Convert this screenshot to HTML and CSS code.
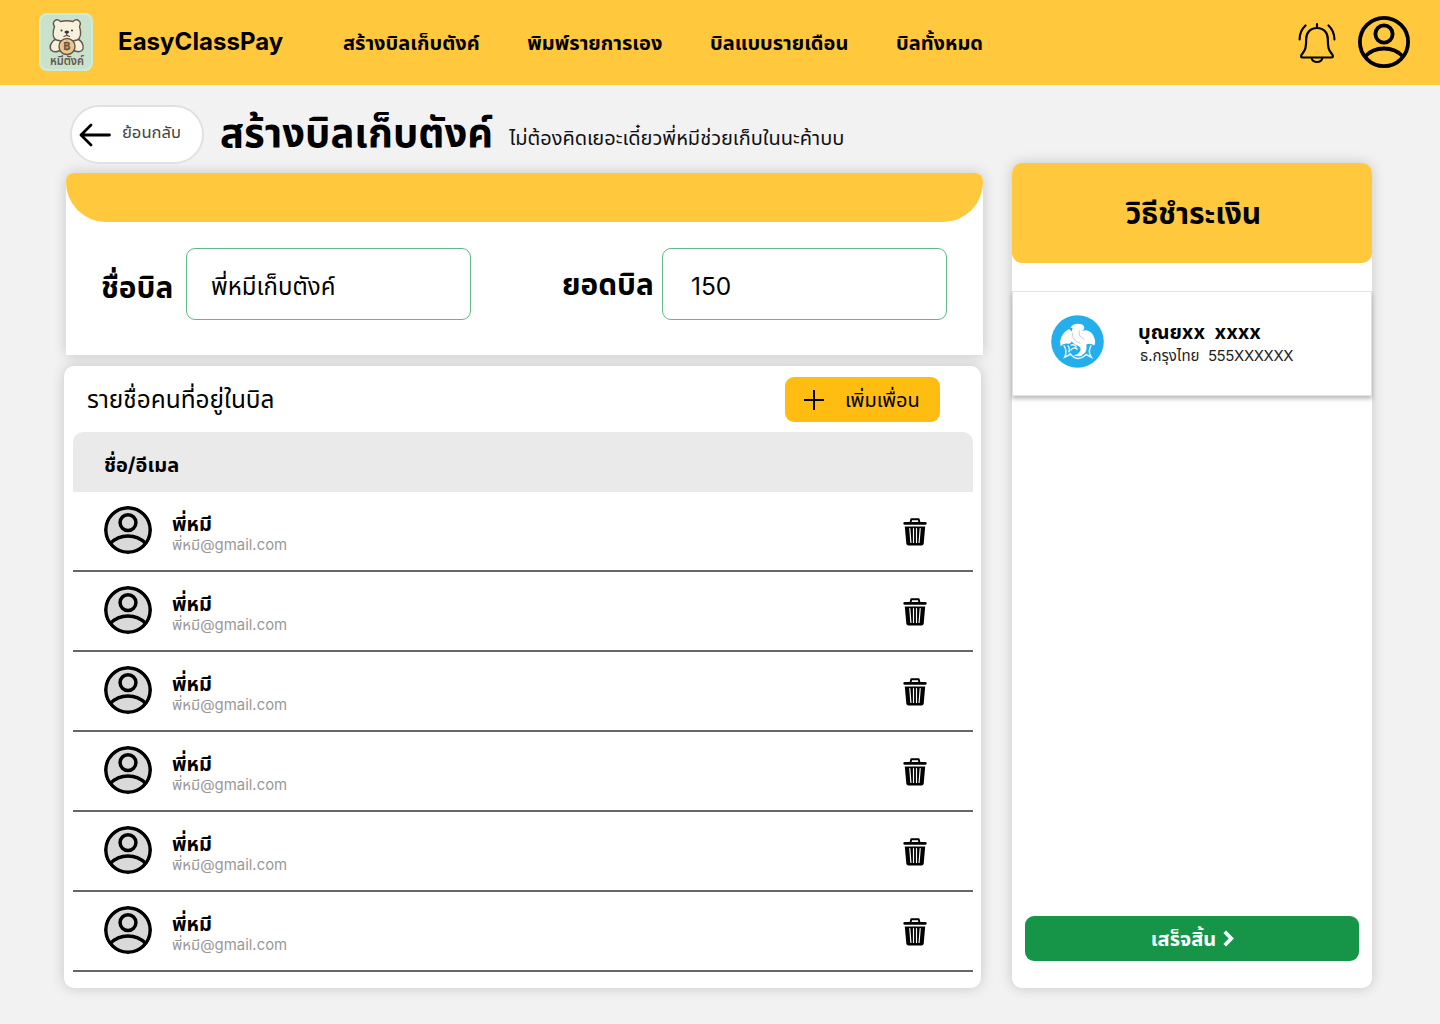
FILE: index.html
```html
<!DOCTYPE html>
<html lang="th">
<head>
<meta charset="utf-8">
<title>EasyClassPay</title>
<link rel="stylesheet" href="styles.css">
</head>
<body>
<svg class="sprite" aria-hidden="true">
  <symbol id="user" viewBox="0 0 52 52">
    <g fill="none" stroke="currentColor" stroke-width="3.800">
      <circle cx="26" cy="26" r="24.100"/>
      <circle cx="26" cy="18" r="8.600"/>
      <path d="M7 40.500C17 29.800 35 29.800 45 40.500"/>
    </g>
  </symbol>
  <symbol id="trash" viewBox="0 0 24 28">
    <path d="M7.500 4.500 8.300 1.300H15.700L16.500 4.500" fill="none" stroke="currentColor" stroke-width="1.900" stroke-linejoin="round"/>
    <rect x="0.400" y="3.900" width="23.200" height="2.900" rx="1.200" fill="currentColor"/>
    <path d="M1.800 8.500H22.200L20.700 25.400Q20.500 27.500 18.600 27.500H5.400Q3.500 27.500 3.300 25.400Z" fill="currentColor"/>
    <path d="M6.800 10.500 7.900 24.500M10.500 10.500V24.500M13.500 10.500V24.500M17.200 10.500 16.100 24.500" stroke="#fff" stroke-width="1.200" fill="none" stroke-linecap="round"/>
  </symbol>
</svg>

<header class="topbar">
  <svg class="logo" viewBox="0 0 54 58">
    <rect width="54" height="58" rx="8" fill="#cdebd9"/>
    <rect x="2" y="2" width="50" height="54" rx="7" fill="#c8e2cd"/>
    <g fill="#f7f0dc" stroke="#65564a" stroke-width="1.400">
      <path d="M17 26C12 28 10 34 12 37Q15 40 20 38H36Q42 40 44 36C45 31 42 27 38 26Z"/>
      <path d="M15.500 13.500C12.500 9 17 4.500 21.500 8.500Q28 7 34 8.500C38.500 4.500 43 9 40.500 13.500C42.500 20 42 25 38 27Q28 30 17.500 27C13.500 25 13.500 19 15.500 13.500Z"/>
      <circle cx="28" cy="33.500" r="8" fill="#ebc78b"/>
    </g>
    <circle cx="22.500" cy="17.500" r="1" fill="#3f3029"/>
    <circle cx="33" cy="17.500" r="1" fill="#3f3029"/>
    <ellipse cx="27.800" cy="19" rx="2.300" ry="1.500" fill="#3f3029"/>
    <path d="M27.800 20V22.500M24.500 23.500Q27.800 21.500 31 23.500" fill="none" stroke="#3f3029"/>
    <text x="28" y="37.300" text-anchor="middle" class="logo-coin">฿</text>
    <text x="28" y="52" text-anchor="middle" class="logo-word" textLength="34" lengthAdjust="spacingAndGlyphs">หมีตังค์</text>
  </svg>
  <div class="brand">EasyClassPay</div>
  <nav class="nav">
    <a>สร้างบิลเก็บตังค์</a>
    <a>พิมพ์รายการเอง</a>
    <a>บิลแบบรายเดือน</a>
    <a>บิลทั้งหมด</a>
  </nav>
  <svg class="bell" viewBox="0 0 38 42" fill="none" stroke="#000" stroke-width="2.200" stroke-linecap="round" stroke-linejoin="round">
    <path d="M19 2V6M19 6C12 6 8.200 11 8.200 17C8.200 25 7.500 28 4.500 31.500C2 34.500 3 35.500 5 35.500H33C35 35.500 36 34.500 33.500 31.500C30.500 28 29.800 25 29.800 17C29.800 11 26 6 19 6ZM13.500 35.500C14 41.500 24 41.500 24.500 35.500M7.500 3.500Q1.600 9 1.600 17.500M30.500 3.500Q36.400 9 36.400 17.500"/>
  </svg>
  <svg class="profile"><use href="#user"/></svg>
</header>

<main class="page">
  <section class="left">
    <div class="heading">
      <a class="back">
        <svg class="arrow" viewBox="0 0 32 24" fill="none" stroke="#000" stroke-width="2.800" stroke-linecap="round" stroke-linejoin="round"><path d="M30.500 12H2M12 2 2 12 12 22"/></svg>
        <span>ย้อนกลับ</span>
      </a>
      <h1>สร้างบิลเก็บตังค์</h1>
      <p class="tagline">ไม่ต้องคิดเยอะเดี๋ยวพี่หมีช่วยเก็บในนะค้าบบ</p>
    </div>

    <div class="bill">
      <div class="bill-band"></div>
      <div class="bill-fields">
        <label class="label-name">ชื่อบิล</label>
        <div class="field field-name"><span>พี่หมีเก็บตังค์</span></div>
        <label class="label-total">ยอดบิล</label>
        <div class="field field-amount"><span>150</span></div>
      </div>
    </div>

    <div class="people">
      <div class="people-head">
        <h2>รายชื่อคนที่อยู่ในบิล</h2>
        <button class="add">
          <svg class="plus" viewBox="0 0 20 20" stroke="#000" stroke-width="2"><path d="M10 0V20M0 10H20"/></svg>
          <span>เพิ่มเพื่อน</span>
        </button>
      </div>
      <div class="table-head"><span>ชื่อ/อีเมล</span></div>
      <div class="row"><svg class="avatar"><use href="#user"/></svg><div class="who"><b>พี่หมี</b><small>พี่หมี@gmail.com</small></div><svg class="trash"><use href="#trash"/></svg></div>
      <div class="row"><svg class="avatar"><use href="#user"/></svg><div class="who"><b>พี่หมี</b><small>พี่หมี@gmail.com</small></div><svg class="trash"><use href="#trash"/></svg></div>
      <div class="row"><svg class="avatar"><use href="#user"/></svg><div class="who"><b>พี่หมี</b><small>พี่หมี@gmail.com</small></div><svg class="trash"><use href="#trash"/></svg></div>
      <div class="row"><svg class="avatar"><use href="#user"/></svg><div class="who"><b>พี่หมี</b><small>พี่หมี@gmail.com</small></div><svg class="trash"><use href="#trash"/></svg></div>
      <div class="row"><svg class="avatar"><use href="#user"/></svg><div class="who"><b>พี่หมี</b><small>พี่หมี@gmail.com</small></div><svg class="trash"><use href="#trash"/></svg></div>
      <div class="row"><svg class="avatar"><use href="#user"/></svg><div class="who"><b>พี่หมี</b><small>พี่หมี@gmail.com</small></div><svg class="trash"><use href="#trash"/></svg></div>
    </div>
  </section>

  <aside class="payment">
    <h2 class="pay-title"><span>วิธีชำระเงิน</span></h2>
    <div class="account">
      <svg class="bank" viewBox="0 0 54 54">
        <circle cx="27" cy="27" r="26.800" fill="#25aeec"/>
        <path d="M20 13Q22 9 27 9Q34 9 34 13.500Q33 16 31 16Q38 14 42 19C45 24 46 28 44 31Q40 28 36 30Q37 36 34 39Q30 44 23 41Q28 41 30 36Q31 33 27 31Q23 30 21 27Q20 30 16 29Q12 29 10 32C8 26 11 18 18 14.500Q20 15 21 17L22 13.500Z" fill="#fff"/>
        <path d="M22 18Q21 26 30 29M29 16Q27 21 34 25" fill="none" stroke="#b9c9d1" stroke-width=".9"/>
        <path d="M13 31Q17 37 14 43L20 40M17 31Q20 34 18 38M41 31Q37 37 41 43L35 40M20 31Q24 29 26 33M20 36Q23 32 27 35M19 39Q27 49 36 40" fill="none" stroke="#e5f6fe" stroke-width="1.500"/>
      </svg>
      <div class="account-text"><b>บุณยxx&nbsp; xxxx</b><span>ธ.กรุงไทย&nbsp; <i>555XXXXXX</i></span></div>
    </div>
    <button class="done">
      <span>เสร็จสิ้น</span>
      <svg class="chevron" viewBox="0 0 11 17" fill="none" stroke="#fff" stroke-width="3.800"><path d="M1.700 1.700 8.300 8.500 1.700 15.300"/></svg>
    </button>
  </aside>
</main>
</body>
</html>
```
FILE: styles.css
```css
* { box-sizing: border-box; }
body {
  margin: 0;
  width: 1440px;
  height: 1024px;
  overflow: hidden;
  background: #f2f2f2;
  color: #000;
  font-family: Inter, "Noto Sans Thai", "Noto Sans", sans-serif;
}
h1, h2, p { margin: 0; }
button { border: 0; padding: 0; font: inherit; color: inherit; }
svg { display: block; flex: none; }
span, a, label, b, small, h1, h2, p { white-space: nowrap; }
.sprite { width: 0; height: 0; position: absolute; }

.topbar {
  height: 85px;
  background: #ffc83d;
  display: flex;
  align-items: center;
  padding: 0 30px 1px 39px;
}
.logo { width: 54px; height: 58px; }
.logo-coin { font-size: 11px; font-weight: 700; fill: #65564a; }
.logo-word { font-size: 12px; font-weight: 600; fill: #65564a; }
.brand { width: 225px; margin-left: 25px; font-size: 24px; font-weight: 650; line-height: 30px; letter-spacing: .050px; }
.nav { display: flex; flex: 1; gap: 47.700px; padding-top: 1px; font-size: 20px; font-weight: 700; line-height: 30px; }
.bell { width: 38px; height: 42px; margin: 2px 22px 0 0; }
.profile { width: 52px; height: 52px; }

.page { display: flex; align-items: flex-start; gap: 29px; padding-left: 64px; }
.left { width: 919px; }
.heading { height: 88px; display: flex; padding: 20px 0 0 6px; }
.back {
  width: 134px;
  height: 59px;
  border: 2px solid #e1e1e1;
  border-radius: 30px;
  background: #fff;
  display: flex;
  align-items: center;
  gap: 11px;
  padding-left: 7px;
  font-size: 16.600px;
  color: #444;
}
.back span { margin-bottom: 4px; }
.arrow { width: 32px; height: 24px; }
.heading h1 { margin: 3px 0 0 16px; font-size: 40px; line-height: 50px; }
.tagline { margin: 18px 0 0 16px; font-size: 20px; line-height: 30px; color: #111; }

.bill {
  margin-left: 2px;
  width: 917px;
  height: 182px;
  background: #fff;
  border-radius: 8px 8px 0 0;
  box-shadow: 0 0 14px rgba(0, 0, 0, .18);
}
.bill-band { height: 49px; background: #ffc83d; border-radius: 8px 8px 40px 40px; }
.bill-fields { display: flex; padding: 26px 0 0 35px; }
.bill-fields label { font-size: 29.800px; font-weight: 700; line-height: 40px; }
.label-name { width: 85px; margin-top: 19px; }
.label-total { width: 100px; margin: 16px 0 0 91px; }
.field {
  width: 285px;
  height: 72px;
  border: 1.500px solid #61b986;
  border-radius: 9px;
  display: flex;
  align-items: center;
  font-size: 24px;
}
.field-name { padding: 7px 0 0 24px; }
.field-amount { padding: 4px 0 0 28px; font-size: 24.500px; }

.people {
  position: relative;
  width: 917px;
  height: 622px;
  margin-top: 11px;
  padding: 0 8px 0 9px;
  background: #fff;
  border-radius: 10px;
  box-shadow: 0 0 14px rgba(0, 0, 0, .18);
}
.people-head { height: 66px; display: flex; justify-content: space-between; padding: 11px 33px 0 14px; }
.people-head h2 { font-size: 24.400px; font-weight: 400; line-height: 45px; }
.add {
  width: 155px;
  height: 45px;
  border-radius: 9px;
  background: #ffbc11;
  display: flex;
  align-items: center;
  gap: 21px;
  padding-left: 19px;
  font-size: 20px;
}
.add span { margin-top: 2px; }
.plus { width: 20px; height: 20px; }
.table-head {
  height: 60px;
  border-radius: 10px 10px 0 0;
  background: #eaeaea;
  padding: 3px 0 0 31px;
  font-size: 20px;
  font-weight: 700;
  line-height: 60px;
}
.row { height: 80px; border-bottom: 2px solid #666; display: flex; align-items: center; padding: 0 46px 2px 31px; }
.avatar { width: 48px; height: 48px; border-radius: 50%; background: #d9d9d9; }
.who { display: flex; flex-direction: column; flex: 1; margin-left: 20px; padding-top: 5px; }
.who b { font-size: 20px; line-height: 24px; }
.who small { font-size: 14.900px; line-height: 18px; color: #999; }
.trash { width: 24px; height: 28px; margin-top: 3px; }

.payment {
  width: 360px;
  height: 825px;
  margin-top: 78px;
  background: #fff;
  border-radius: 10px;
  box-shadow: 0 0 14px rgba(0, 0, 0, .18);
  display: flex;
  flex-direction: column;
}
.pay-title { height: 100px; padding-left: 3px; border-radius: 10px; background: #ffc83d; text-align: center; font-size: 30px; line-height: 100px; }
.account {
  height: 105px;
  margin-top: 28px;
  border: 1px solid #e4e4e4;
  box-shadow: 0 3px 4px rgba(0, 0, 0, .25);
  background: #fff;
  display: flex;
  padding: 23px 0 0 38px;
}
.bank { width: 53px; height: 53px; }
.account-text { display: flex; flex-direction: column; margin: 4px 0 0 34px; }
.account-text b { font-size: 20px; line-height: 26px; }
.account-text span { margin: 1px 0 0 2px; font-size: 15px; line-height: 20px; color: #222; }
.account-text i { font-style: normal; letter-spacing: -.400px; }
.done {
  height: 45px;
  margin: auto 13px 27px;
  border-radius: 9px;
  background: #169447;
  color: #fff;
  display: flex;
  align-items: center;
  justify-content: center;
  gap: 7px;
  padding-left: 1px;
  font-size: 20px;
  font-weight: 700;
}
.done span { margin-top: 2px; }
.chevron { width: 11px; height: 17px; }
```
